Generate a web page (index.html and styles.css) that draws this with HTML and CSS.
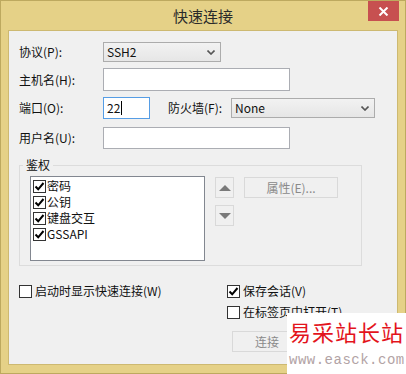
FILE: index.html
```html
<!DOCTYPE html>
<html lang="zh-CN">
<head>
    <meta charset="UTF-8">
    <title>快速连接</title>
    <link rel="stylesheet" href="styles.css">
</head>
<body>
    <div class="window">
        <div class="titlebar">
            <span class="title">快速连接</span>
            <span class="close">
                <svg width="11" height="9" viewBox="0 0 11 9"><path d="M1.5 0.5 L9.5 8.5 M9.5 0.5 L1.5 8.5" stroke="#fff" stroke-width="2"/></svg>
            </span>
        </div>

        <div class="client">
            <!-- 连接参数 -->
            <div class="row r1">
                <span class="lbl">协议(P):</span>
                <div class="combo w-proto">
                    <span>SSH2</span>
                    <svg class="chev" width="8" height="5" viewBox="0 0 8 5"><path d="M0.5 0.5 L4 4 L7.5 0.5" stroke="#555" stroke-width="1.6" fill="none"/></svg>
                </div>
            </div>
            <div class="row r2">
                <span class="lbl">主机名(H):</span>
                <div class="field w-host"></div>
            </div>
            <div class="row r3">
                <span class="lbl">端口(O):</span>
                <div class="field w-port focus">22<span class="caret"></span></div>
                <span class="lbl-fw">防火墙(F):</span>
                <div class="combo w-fw">
                    <span>None</span>
                    <svg class="chev" width="8" height="5" viewBox="0 0 8 5"><path d="M0.5 0.5 L4 4 L7.5 0.5" stroke="#555" stroke-width="1.6" fill="none"/></svg>
                </div>
            </div>
            <div class="row r4">
                <span class="lbl">用户名(U):</span>
                <div class="field w-user"></div>
            </div>

            <!-- 鉴权 -->
            <fieldset class="group">
                <legend>鉴权</legend>
                <div class="group-body">
                    <div class="list">
                        <div class="item"><span class="box on"></span>密码</div>
                        <div class="item"><span class="box on"></span>公钥</div>
                        <div class="item"><span class="box on"></span>键盘交互</div>
                        <div class="item"><span class="box on"></span>GSSAPI</div>
                    </div>
                    <div class="arrows">
                        <div class="btn arrow"><span class="tri up"></span></div>
                        <div class="btn arrow"><span class="tri down"></span></div>
                    </div>
                    <div class="btn props">属性(E)...</div>
                </div>
            </fieldset>

            <!-- 选项 -->
            <div class="options">
                <div class="opt"><span class="box"></span>启动时显示快速连接(W)</div>
                <div class="opt"><span class="box on"></span>保存会话(V)</div>
                <div></div>
                <div class="opt"><span class="box"></span>在标签页中打开(T)</div>
                <div></div>
                <div class="actions">
                    <div class="btn connect">连接</div>
                </div>
            </div>
        </div>

        <div class="watermark">
            <div class="wm-name">易采站长站</div>
            <div class="wm-url">www.easck.com</div>
        </div>
    </div>
</body>
</html>
```

FILE: styles.css
```css
body {
    margin: 0;
    font-family: "Noto Sans CJK SC", sans-serif;
    font-size: 12px;
    color: #111;
}
.window {
    position: relative;
    width: 406px;
    height: 374px;
    box-sizing: border-box;
    border: 1px solid #bda95f;
    background: #e5d187;
    padding: 0 7px 8px;
    display: flex;
    flex-direction: column;
}
.titlebar {
    position: relative;
    height: 29px;
    margin: 0 -7px;
    text-align: center;
}
.title {
    font-size: 15px;
    line-height: 29px;
    color: #2a2a2a;
}
.close {
    position: absolute;
    top: 0;
    right: 6px;
    width: 31px;
    height: 20px;
    background: #c75050;
    display: flex;
    align-items: center;
    justify-content: center;
}
.client {
    flex: 1;
    background: #f0f0f0;
    border: 1px solid #cdb971;
    padding: 11px 10px 0;
    line-height: 16px;
}
.row {
    display: flex;
    align-items: center;
}
.r1 { height: 20px; }
.r2 { height: 23px; margin-top: 6px; }
.r3 { height: 22px; margin-top: 6px; }
.r4 { height: 22px; margin-top: 8px; }
.lbl {
    width: 84px;
}
.lbl-fw {
    width: 63px;
    margin-left: 18px;
}
.field {
    box-sizing: border-box;
    height: 100%;
    background: #fff;
    border: 1px solid #abadb3;
    padding-left: 3px;
    display: flex;
    align-items: center;
}
.field.focus {
    border-color: #569de5;
}
.caret {
    width: 1px;
    height: 14px;
    background: #000;
    margin-left: 1px;
}
.w-host, .w-user { width: 187px; }
.w-port { width: 47px; }
.combo {
    box-sizing: border-box;
    height: 20px;
    display: flex;
    align-items: center;
    justify-content: space-between;
    border: 1px solid #acacac;
    background: linear-gradient(#f2f2f2, #e6e6e6);
    padding: 0 5px 0 3px;
}
.w-proto { width: 118px; }
.w-fw { width: 144px; }
.group {
    margin: 8px 0 0;
    padding: 0;
    width: 343px;
    box-sizing: border-box;
    border: 1px solid #dcdcdc;
    min-width: 0;
}
.group legend {
    margin-left: 3px;
    padding: 0 3px;
    line-height: 16px;
}
.group-body {
    display: flex;
    gap: 10px;
    padding: 3px 0 4px 10px;
}
.list {
    width: 175px;
    height: 85px;
    box-sizing: border-box;
    background: #fff;
    border: 1px solid #828790;
    padding: 1px 0 0 2px;
}
.item {
    display: flex;
    align-items: center;
    height: 16px;
    gap: 1px;
}
.box {
    width: 13px;
    height: 13px;
    box-sizing: border-box;
    border: 1px solid #333;
    background: #fff;
    flex: none;
}
.box.on {
    background: #fff url("data:image/svg+xml,%3Csvg xmlns='http://www.w3.org/2000/svg' width='11' height='11' viewBox='0 0 11 11'%3E%3Cpath d='M1.5 5.5 L4.2 8.3 L9.5 2' stroke='%23000' stroke-width='2' fill='none'/%3E%3C/svg%3E") center no-repeat;
}
.btn {
    box-sizing: border-box;
    border: 1px solid #d9d9d9;
    background: #f0f0f0;
    color: #8a8a8a;
    display: flex;
    align-items: center;
    justify-content: center;
}
.arrows {
    display: flex;
    flex-direction: column;
    gap: 7px;
    margin-top: 1px;
}
.arrow {
    width: 19px;
    height: 21px;
}
.tri {
    width: 0;
    height: 0;
    border-left: 6px solid transparent;
    border-right: 6px solid transparent;
}
.tri.up { border-bottom: 6px solid #7a7a7a; }
.tri.down { border-top: 6px solid #7a7a7a; }
.props {
    width: 94px;
    height: 21px;
    margin-top: 1px;
}
.options {
    display: grid;
    grid-template-columns: 208px auto;
    row-gap: 5px;
    margin-top: 17px;
}
.opt {
    display: flex;
    align-items: center;
    height: 16px;
    gap: 3px;
}
.actions {
    display: flex;
    margin: 6px 0 0 5px;
}
.connect {
    width: 70px;
    height: 21px;
}
.watermark {
    position: absolute;
    left: 286px;
    top: 312px;
    right: -1px;
    bottom: -1px;
    background: #fff;
    padding: 3px 0 0 2px;
}
.wm-name {
    font-size: 22px;
    line-height: 30px;
    letter-spacing: 1px;
    color: #e3141c;
}
.wm-url {
    font-family: "Liberation Mono", monospace;
    font-size: 14px;
    line-height: 18px;
    letter-spacing: 0.5px;
    color: #b2a3a5;
    margin-top: 5px;
}
```
